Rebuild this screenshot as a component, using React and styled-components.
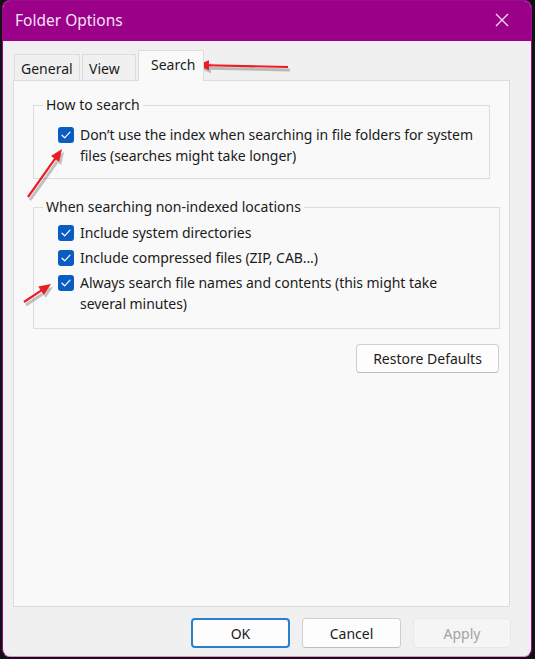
import React from "react";
import styled, { createGlobalStyle } from "styled-components";

const Global = createGlobalStyle`
  html, body { margin: 0; padding: 0; background: #141014; }
  body { font-family: "Noto Sans", "Open Sans", sans-serif; }
  * { box-sizing: border-box; }
`;

const Stage = styled.div`
  position: relative;
  width: 535px;
  height: 659px;
  padding-left: 2px;
`;

const Window = styled.div`
  width: 530px;
  height: 657px;
  border: 1px solid #9b0a8c;
  border-bottom-color: #e28ad8;
  border-radius: 8px;
  overflow: hidden;
  background: #f0f0f0;
  display: flex;
  flex-direction: column;
`;

const TitleBar = styled.div`
  height: 40px;
  flex: none;
  background: #9a0088;
  display: flex;
  align-items: center;
  justify-content: space-between;
  padding: 0 22px 2px 12px;
  color: #f6e4f4;
  font-size: 15.5px;
`;

const Close = styled.svg`
  width: 14px;
  height: 14px;
  display: block;
`;

const Body = styled.div`
  flex: 1;
  display: flex;
  flex-direction: column;
  padding: 9px 21px 0 10px;
`;

const Tabs = styled.div`
  display: flex;
  align-items: flex-end;
  gap: 2px;
  padding-left: 1px;
  height: 31px;
  position: relative;
  z-index: 1;
  margin-bottom: -1px;
`;

const Tab = styled.div`
  height: ${(p) => (p.$active ? "31px" : "27px")};
  padding: ${(p) => (p.$active ? "4px 10px 0 12px" : "4px 6px 0 6px")};
  width: ${(p) => p.$w}px;
  border: 1px solid #dcdcdc;
  border-bottom: ${(p) => (p.$active ? "none" : "1px solid #dcdcdc")};
  background: ${(p) => (p.$active ? "#f9f9f9" : "#f0f0f0")};
  font-size: 14px;
  color: #1b1b1b;
  line-height: 20px;
`;

const Panel = styled.div`
  height: 527px;
  border: 1px solid #dcdcdc;
  background: #f9f9f9;
  display: flex;
  flex-direction: column;
  align-items: flex-start;
  padding: 14px 0 0 19px;
`;

const Group = styled.fieldset`
  width: ${(p) => p.$w}px;
  height: ${(p) => p.$h}px;
  margin: 0 0 ${(p) => p.$mb || 0}px 0;
  padding: ${(p) => p.$pt}px 0 0 9px;
  border: 1px solid #dcdcdc;
  display: flex;
  flex-direction: column;
  gap: 4px;
`;

const Legend = styled.legend`
  margin: 0;
  padding: 0 3px;
  font-size: 14px;
  color: #1b1b1b;
  line-height: 20px;
`;

const Row = styled.label`
  display: flex;
  align-items: flex-start;
  gap: 6px;
  margin-left: 15px;
  font-size: 14px;
  line-height: 21px;
  letter-spacing: -0.05px;
  color: #1b1b1b;
`;

const Box = styled.span`
  flex: none;
  width: 16px;
  height: 16px;
  margin-top: 3px;
  border-radius: 3px;
  background: #0a5cc0;
  display: flex;
  align-items: center;
  justify-content: center;
`;

const Button = styled.button`
  width: ${(p) => p.$w}px;
  height: ${(p) => p.$h || 30}px;
  border-radius: 4px;
  font-family: inherit;
  font-size: 14px;
  color: ${(p) => (p.$disabled ? "#a3a3a3" : "#1b1b1b")};
  background: ${(p) => (p.$disabled ? "#f5f5f5" : "#fdfdfd")};
  border: ${(p) =>
    p.$primary ? "2px solid #2a7fd0" : p.$disabled ? "1px solid #e8e8e8" : "1px solid #cfcfcf"};
  border-bottom-color: ${(p) =>
    p.$primary ? "#2a7fd0" : p.$disabled ? "#e8e8e8" : "#bdbdbd"};
  padding: 0;
`;

const RestoreWrap = styled.div`
  align-self: flex-end;
  margin: 15px 10px 0 0;
`;

const Footer = styled.div`
  display: flex;
  justify-content: flex-end;
  gap: 12px;
  padding-top: 11px;
  margin-right: -1px;
`;

const Overlay = styled.svg`
  position: absolute;
  left: 0;
  top: 0;
  width: 535px;
  height: 659px;
  pointer-events: none;
`;

const Check = () => (
  <svg width="10" height="8" viewBox="0 0 10 8">
    <path d="M1 4.2 L3.7 6.8 L9 1.2" fill="none" stroke="#fff" strokeWidth="1.2" strokeLinecap="round" strokeLinejoin="round" />
  </svg>
);

const Arrow = ({ x1, y1, x2, y2 }) => {
  const dx = x2 - x1;
  const dy = y2 - y1;
  const len = Math.hypot(dx, dy);
  const ux = dx / len;
  const uy = dy / len;
  const hl = 12;
  const hw = 5;
  const bx = x2 - ux * hl;
  const by = y2 - uy * hl;
  const pts = `${x2},${y2} ${bx - uy * hw},${by + ux * hw} ${bx + uy * hw},${by - ux * hw}`;
  return (
    <g>
      <g opacity="0.22" transform="translate(2,3)">
        <line x1={x1} y1={y1} x2={bx} y2={by} stroke="#000" strokeWidth="3" />
        <polygon points={pts} fill="#000" />
      </g>
      <line x1={x1} y1={y1} x2={bx + ux} y2={by + uy} stroke="#ec1c24" strokeWidth="2.2" />
      <polygon points={pts} fill="#ec1c24" />
    </g>
  );
};

export default function App() {
  return (
    <>
      <Global />
      <Stage>
        <Window>
          <TitleBar>
            <span>Folder Options</span>
            <Close viewBox="0 0 14 14">
              <path d="M1 1 L13 13 M13 1 L1 13" stroke="#f3dcf0" strokeWidth="1.4" />
            </Close>
          </TitleBar>
          <Body>
            <Tabs>
              <Tab $w={66}>General</Tab>
              <Tab $w={54}>View</Tab>
              <Tab $w={66} $active>Search</Tab>
            </Tabs>
            <Panel>
              <Group $w={457} $h={84} $mb={18} $pt={9}>
                <Legend>How to search</Legend>
                <Row>
                  <Box><Check /></Box>
                  <span>
                    Don’t use the index when searching in file folders for system
                    <br />
                    files (searches might take longer)
                  </span>
                </Row>
              </Group>
              <Group $w={467} $h={132} $pt={5}>
                <Legend>When searching non-indexed locations</Legend>
                <Row>
                  <Box><Check /></Box>
                  <span>Include system directories</span>
                </Row>
                <Row>
                  <Box><Check /></Box>
                  <span>Include compressed files (ZIP, CAB...)</span>
                </Row>
                <Row>
                  <Box><Check /></Box>
                  <span>
                    Always search file names and contents (this might take
                    <br />
                    several minutes)
                  </span>
                </Row>
              </Group>
              <RestoreWrap>
                <Button $w={143} $h={29}>Restore Defaults</Button>
              </RestoreWrap>
            </Panel>
            <Footer>
              <Button $w={99} $primary>OK</Button>
              <Button $w={99}>Cancel</Button>
              <Button $w={98} $disabled>Apply</Button>
            </Footer>
          </Body>
        </Window>
        <Overlay viewBox="0 0 535 659">
          <Arrow x1={288} y1={67} x2={197} y2={65} />
          <Arrow x1={28} y1={197} x2={62} y2={149} />
          <Arrow x1={24} y1={302} x2={51} y2={284} />
        </Overlay>
      </Stage>
    </>
  );
}
